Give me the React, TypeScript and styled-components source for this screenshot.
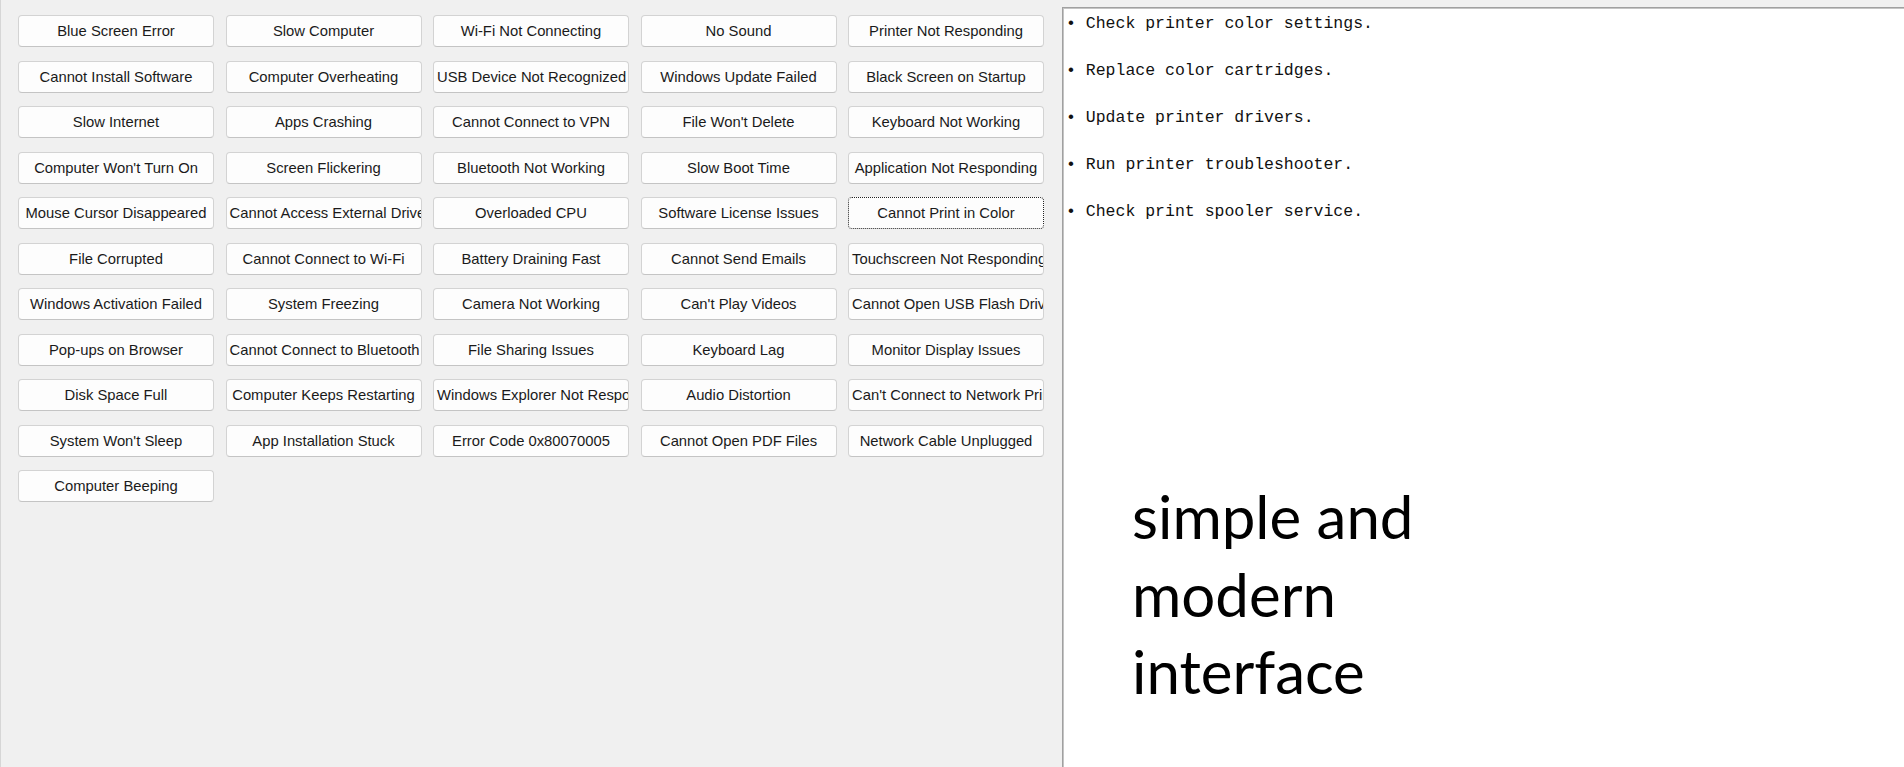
import React from "react";
import styled, { createGlobalStyle } from "styled-components";

const issues = [
  "Blue Screen Error",
  "Slow Computer",
  "Wi-Fi Not Connecting",
  "No Sound",
  "Printer Not Responding",
  "Cannot Install Software",
  "Computer Overheating",
  "USB Device Not Recognized",
  "Windows Update Failed",
  "Black Screen on Startup",
  "Slow Internet",
  "Apps Crashing",
  "Cannot Connect to VPN",
  "File Won't Delete",
  "Keyboard Not Working",
  "Computer Won't Turn On",
  "Screen Flickering",
  "Bluetooth Not Working",
  "Slow Boot Time",
  "Application Not Responding",
  "Mouse Cursor Disappeared",
  "Cannot Access External Drive",
  "Overloaded CPU",
  "Software License Issues",
  "Cannot Print in Color",
  "File Corrupted",
  "Cannot Connect to Wi-Fi",
  "Battery Draining Fast",
  "Cannot Send Emails",
  "Touchscreen Not Responding",
  "Windows Activation Failed",
  "System Freezing",
  "Camera Not Working",
  "Can't Play Videos",
  "Cannot Open USB Flash Drive",
  "Pop-ups on Browser",
  "Cannot Connect to Bluetooth",
  "File Sharing Issues",
  "Keyboard Lag",
  "Monitor Display Issues",
  "Disk Space Full",
  "Computer Keeps Restarting",
  "Windows Explorer Not Responding",
  "Audio Distortion",
  "Can't Connect to Network Printer",
  "System Won't Sleep",
  "App Installation Stuck",
  "Error Code 0x80070005",
  "Cannot Open PDF Files",
  "Network Cable Unplugged",
  "Computer Beeping",
];

const steps = [
  "Check printer color settings.",
  "Replace color cartridges.",
  "Update printer drivers.",
  "Run printer troubleshooter.",
  "Check print spooler service.",
];

const App = () => {
  const selected = "Cannot Print in Color";
  return (
    <>
      <GlobalStyle />
      <Window>
        <ButtonFrame>
          <IssueGrid>
            {issues.map((name) => (
              <IssueButton key={name} $active={name === selected}>
                {name}
              </IssueButton>
            ))}
          </IssueGrid>
        </ButtonFrame>
        <SolutionPanel>
          <StepList>
            {steps.map((s) => (
              <Step key={s}>• {s}</Step>
            ))}
          </StepList>
          <Tagline>
            simple and
            <br />
            modern
            <br />
            interface
          </Tagline>
        </SolutionPanel>
      </Window>
    </>
  );
};

const GlobalStyle = createGlobalStyle`
  html, body {
    margin: 0;
    padding: 0;
    background: #f0f0f0;
    overflow: hidden;
  }
`;

const Window = styled.div`
  display: flex;
  width: 1904px;
  height: 767px;
  background: #f0f0f0;
`;

const ButtonFrame = styled.div`
  width: 1062px;
  flex-shrink: 0;
  box-sizing: border-box;
  border-left: 1px solid #d6d6d6;
  padding: 15px 0 0 17px;
`;

const IssueGrid = styled.div`
  display: grid;
  grid-template-columns: repeat(5, 196px);
  grid-auto-rows: 32px;
  column-gap: 11.5px;
  row-gap: 13.5px;
`;

const IssueButton = styled.div<{ $active?: boolean }>`
  box-sizing: border-box;
  height: 32px;
  padding: 0 3px;
  background: #fdfdfd;
  border: 1px solid ${(p) => (p.$active ? "#fdfdfd" : "#d3d3d3")};
  border-bottom-color: ${(p) => (p.$active ? "#fdfdfd" : "#c4c4c4")};
  border-radius: 4px;
  outline: ${(p) => (p.$active ? "1px dotted #222" : "none")};
  outline-offset: -1px;
  font-family: "Liberation Sans", Arial, sans-serif;
  font-size: 14.8px;
  line-height: 30px;
  color: #1a1a1a;
  text-align: center;
  white-space: nowrap;
  overflow: hidden;
`;

const SolutionPanel = styled.div`
  flex: 1;
  margin-top: 7px;
  display: flex;
  flex-direction: column;
  background: #ffffff;
  border-top: 1px solid #a0a0a0;
  border-left: 1px solid #a0a0a0;
  box-shadow: inset 1px 1px 0 #c4c4c4;
  padding: 3.5px 0 0 3px;
`;

const StepList = styled.div`
  display: flex;
  flex-direction: column;
  gap: 23.5px;
`;

const Step = styled.div`
  font-family: "Liberation Mono", "Courier New", monospace;
  font-size: 16.5px;
  line-height: 23.5px;
  color: #111;
  white-space: pre;
`;

const Tagline = styled.div`
  margin: 255px 0 0 66px;
  font-family: Lato, "Open Sans", sans-serif;
  font-size: 60px;
  line-height: 77.5px;
  color: #000;
`;

export default App;
